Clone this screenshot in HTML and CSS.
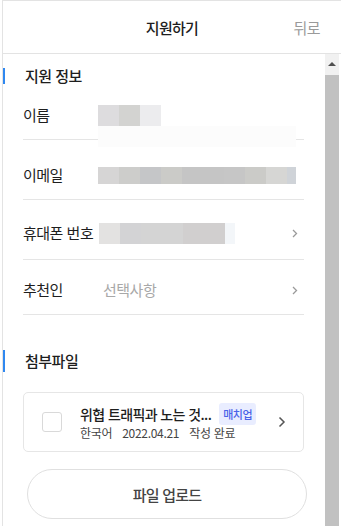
FILE: index.html
```html
<!DOCTYPE html>
<html lang="ko">
<head>
    <meta charset="UTF-8">
    <meta name="viewport" content="width=device-width, initial-scale=1.0">
    <title>지원하기</title>
    <link rel="stylesheet" href="styles.css">
</head>
<body>
    <div class="modal">
        <header class="modal-header">
            <span></span>
            <h1 class="modal-title">지원하기</h1>
            <button class="back">뒤로</button>
        </header>

        <div class="modal-body">
            <div class="content">
                <h2 class="section-title">지원 정보</h2>

                <div class="field field-name">
                    <span class="label">이름</span>
                    <div class="mosaic mosaic-name"></div>
                </div>

                <div class="field field-email">
                    <span class="label">이메일</span>
                    <div class="mosaic mosaic-email"></div>
                </div>

                <div class="field field-phone">
                    <span class="label">휴대폰 번호</span>
                    <div class="value">
                        <div class="mosaic mosaic-phone"></div>
                    </div>
                    <svg class="chevron" width="6" height="9" viewBox="0 0 6 9"><path d="M1 1l3.5 3.5L1 8" fill="none" stroke="#9a9a9a" stroke-width="1.3"/></svg>
                </div>

                <div class="field field-ref">
                    <span class="label">추천인</span>
                    <span class="value placeholder">선택사항</span>
                    <svg class="chevron" width="6" height="9" viewBox="0 0 6 9"><path d="M1 1l3.5 3.5L1 8" fill="none" stroke="#9a9a9a" stroke-width="1.3"/></svg>
                </div>

                <h2 class="section-title section-title-tall">첨부파일</h2>

                <div class="file-card">
                    <span class="checkbox"></span>
                    <div class="file-info">
                        <div class="file-top">
                            <span class="file-name">위협 트래픽과 노는 것...</span>
                            <span class="badge">매치업</span>
                        </div>
                        <div class="file-meta">
                            <span>한국어</span>
                            <span>2022.04.21</span>
                            <span>작성 완료</span>
                        </div>
                    </div>
                    <svg class="card-chevron" width="8" height="12" viewBox="0 0 8 12"><path d="M1.5 1.5L6 6l-4.5 4.5" fill="none" stroke="#555" stroke-width="1.5"/></svg>
                </div>

                <button class="upload">파일 업로드</button>
            </div>

            <div class="scrollbar">
                <div class="scroll-arrow"></div>
                <div class="scroll-thumb"></div>
            </div>
        </div>
    </div>
</body>
</html>
```

FILE: styles.css
```css
body {
    margin: 0;
    font-family: "Noto Sans CJK KR", sans-serif;
    background: #fff;
    color: #1e1e1e;
    overflow: hidden;
}

.modal {
    margin-left: 2px;
    height: 526px;
    border-top: 1px solid #e3e3e3;
    border-left: 1px solid #e3e3e3;
    box-sizing: border-box;
    display: flex;
    flex-direction: column;
}

.modal-header {
    height: 52px;
    border-bottom: 1px solid #e3e3e3;
    display: grid;
    grid-template-columns: 1fr auto 1fr;
    align-items: center;
    padding: 0 21px;
}

.modal-title {
    margin: 0;
    font-size: 15px;
    font-weight: 500;
    letter-spacing: -0.7px;
    color: #1e1e1e;
}

.back {
    justify-self: end;
    border: none;
    background: none;
    padding: 0;
    font-family: inherit;
    font-size: 15px;
    letter-spacing: -0.5px;
    color: #9a9a9a;
}

.modal-body {
    flex: 1;
    display: flex;
    min-height: 0;
}

.content {
    flex: 1;
    padding: 0 21px 0 20px;
}

.section-title {
    margin: 14px 0 0 -20px;
    padding-left: 20px;
    border-left: 2px solid #2f88f0;
    font-size: 15px;
    font-weight: 500;
    letter-spacing: -0.5px;
    line-height: 16px;
    color: #1e1e1e;
}

.section-title-tall {
    margin-top: 35px;
    line-height: 22px;
}

.field {
    display: flex;
    align-items: center;
    border-bottom: 1px solid #e5e5e5;
    padding: 23px 0 13px;
    line-height: 22px;
}

.label {
    width: 75px;
    flex-shrink: 0;
    font-size: 15px;
    letter-spacing: -0.5px;
    color: #1e1e1e;
}

.value {
    flex: 1;
}

.placeholder {
    padding-left: 5px;
    font-size: 15px;
    letter-spacing: -0.5px;
    color: #a8a8a8;
}

.chevron {
    margin-right: 6px;
}

.field-name {
    align-items: flex-start;
    padding: 20px 0 0;
}

.field-email {
    padding-top: 24px;
}

.field-phone {
    padding: 22px 0 15px;
}

.field-ref {
    padding: 19px 0 13px;
}

.mosaic-name {
    width: 198px;
    height: 42px;
    margin: 1px 0 -8px;
    background:
        linear-gradient(to right, #dddcde 0 21px, #d3d3d1 21px 42px, #ececee 42px 63px, transparent 63px) top left / 100% 21px no-repeat,
        linear-gradient(#fcfcfc, #fcfcfc) bottom left / 100% 21px no-repeat;
}

.mosaic-email {
    width: 198px;
    height: 17px;
    background: linear-gradient(to right,
        #d6d5d5 0 21px, #cdcdcb 21px 42px, #c5c6c8 42px 63px, #cbcbc8 63px 84px,
        #c5c5c5 84px 126px, #c6c6c6 126px 147px, #cbcbc8 147px 168px,
        #d6d6d4 168px 189px, #cfd3d8 189px 198px);
}

.mosaic-phone {
    width: 136px;
    height: 21px;
    margin-left: 1px;
    background: linear-gradient(to right,
        #e3e2e1 0 21px, #d3d3d5 21px 42px, #d4d4d4 42px 84px,
        #d1cfcf 84px 126px, #f3f6f9 126px 136px);
}

.file-card {
    margin-top: 20px;
    height: 58px;
    border: 1px solid #e6e6e6;
    border-radius: 5px;
    display: flex;
    align-items: center;
    padding: 0 17px 0 18px;
}

.checkbox {
    width: 18px;
    height: 18px;
    border: 1px solid #d9d9d9;
    border-radius: 3px;
    flex-shrink: 0;
}

.file-info {
    flex: 1;
    margin-left: 18px;
}

.file-top {
    display: flex;
    align-items: center;
    gap: 8px;
}

.file-name {
    font-size: 14px;
    font-weight: 500;
    letter-spacing: -0.6px;
    color: #1e1e1e;
}

.badge {
    background: #e9edff;
    color: #4a63e8;
    font-size: 11px;
    font-weight: 500;
    letter-spacing: -0.5px;
    line-height: 22px;
    padding: 0 4px;
    border-radius: 3px;
}

.file-meta {
    display: flex;
    gap: 10px;
    font-size: 12px;
    letter-spacing: -0.3px;
    color: #444;
    line-height: 16px;
}

.upload {
    display: block;
    margin: 17px -3px 0 4px;
    width: calc(100% - 1px);
    height: 50px;
    border: 1px solid #e0e0e0;
    border-radius: 25px;
    background: #fff;
    font-family: inherit;
    font-size: 15px;
    font-weight: 500;
    letter-spacing: -0.8px;
    color: #444;
}

.scrollbar {
    width: 14px;
    margin-right: 2px;
    background: #f1f1f1;
    display: flex;
    flex-direction: column;
}

.scroll-arrow {
    height: 21px;
    display: flex;
    justify-content: center;
    padding-top: 8px;
    box-sizing: border-box;
}

.scroll-arrow::before {
    content: "";
    width: 0;
    height: 0;
    border-left: 4px solid transparent;
    border-right: 4px solid transparent;
    border-bottom: 4px solid #505050;
}

.scroll-thumb {
    flex: 1;
    background: #c1c1c1;
}
```
